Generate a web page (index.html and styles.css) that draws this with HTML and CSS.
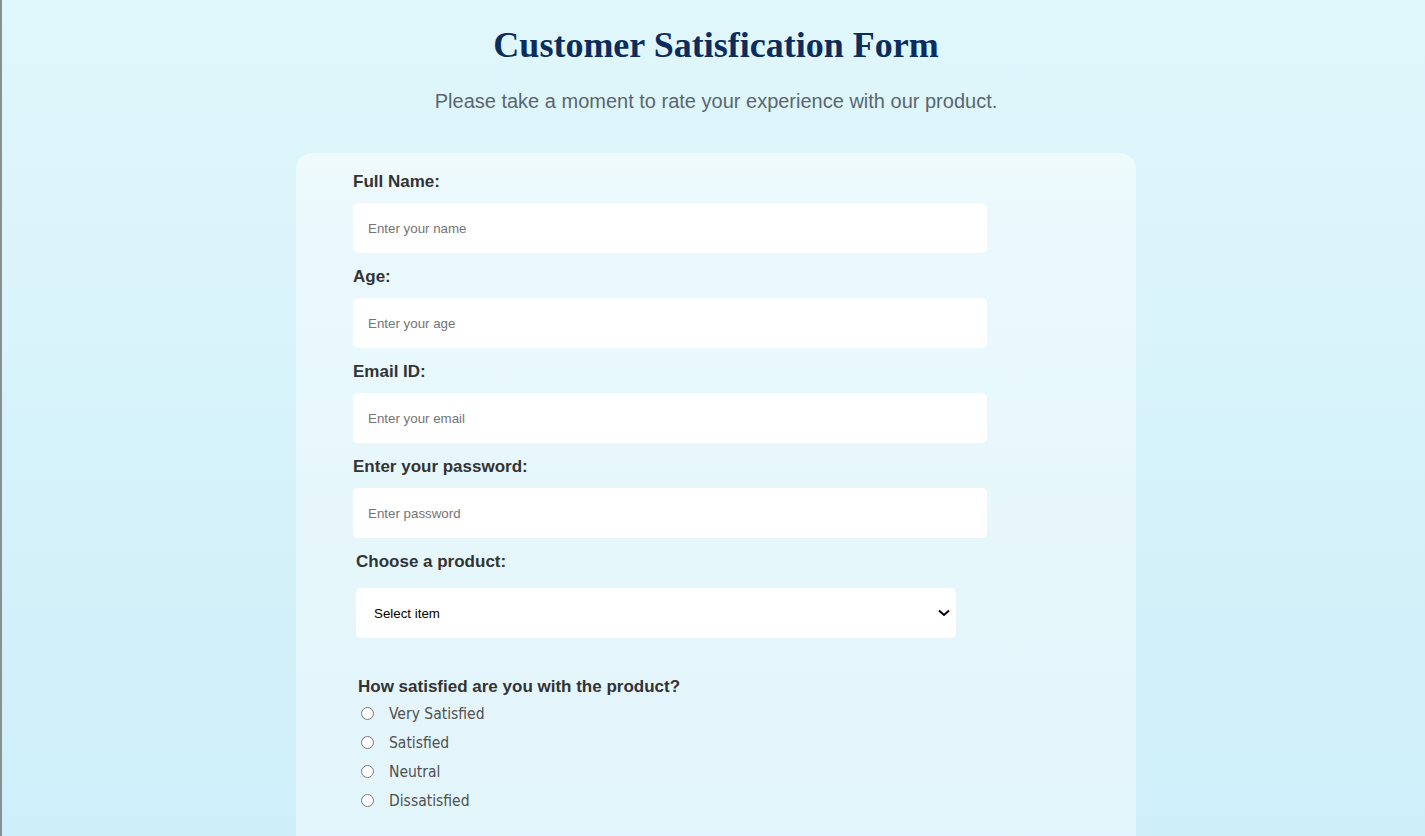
FILE: index.html
```html
<!DOCTYPE html>
<html lang="en">
<head>
<meta charset="utf-8">
<title>Customer Satisfication Form</title>
<link rel="stylesheet" href="styles.css">
</head>
<body>
<div class="page">
  <h1 class="title">Customer Satisfication Form</h1>
  <p class="subtitle">Please take a moment to rate your experience with our product.</p>
  <form class="card">
    <label class="label" for="name">Full Name:</label>
    <input class="field" id="name" type="text" placeholder="Enter your name">
    <label class="label" for="age">Age:</label>
    <input class="field" id="age" type="text" placeholder="Enter your age">
    <label class="label" for="email">Email ID:</label>
    <input class="field" id="email" type="text" placeholder="Enter your email">
    <label class="label" for="pw">Enter your password:</label>
    <input class="field" id="pw" type="password" placeholder="Enter password">
    <label class="label label-product" for="product">Choose a product:</label>
    <div class="select-wrap">
      <select class="select" id="product">
        <option>Select item</option>
      </select>
      <svg class="chev" width="12" height="8" viewBox="0 0 12 8"><path d="M1 1.5 L6 6 L11 1.5" fill="none" stroke="#000" stroke-width="2"/></svg>
    </div>
    <div class="question">How satisfied are you with the product?</div>
    <div class="options">
      <label class="opt"><input type="radio" name="sat"><span>Very Satisfied</span></label>
      <label class="opt"><input type="radio" name="sat"><span>Satisfied</span></label>
      <label class="opt"><input type="radio" name="sat"><span>Neutral</span></label>
      <label class="opt"><input type="radio" name="sat"><span>Dissatisfied</span></label>
    </div>
  </form>
</div>
</body>
</html>
```

FILE: styles.css
```css
html {
  background: #8a8f94;
  height: 100%;
}
body {
  margin: 0 0 0 2px;
  min-height: 100%;
  background: linear-gradient(to bottom, #e0f7fb 0%, #cdeef9 100%);
  border-bottom-left-radius: 6px;
  overflow: hidden;
  font-family: "Liberation Sans", Arial, sans-serif;
}
.page {
  padding-left: 5px;
  padding-top: 24px;
  display: flex;
  flex-direction: column;
  align-items: center;
}
.title {
  font-family: "Liberation Serif", "Times New Roman", serif;
  font-weight: bold;
  font-size: 36px;
  line-height: 42px;
  color: #0a2d5e;
  margin: 0;
}
.subtitle {
  font-size: 20px;
  line-height: 24px;
  color: #5b6570;
  margin: 23px 0 0;
}
.card {
  width: 840px;
  box-sizing: border-box;
  margin-top: 40px;
  padding: 19px 0 40px 57px;
  border-radius: 16px;
  background: linear-gradient(to bottom, rgba(255,255,255,0.55) 0px, rgba(255,255,255,0.42) 60px, rgba(255,255,255,0.42) 100%);
  display: flex;
  flex-direction: column;
  align-items: flex-start;
  min-height: 720px;
}
.label {
  display: block;
  font-size: 17px;
  line-height: 20px;
  font-weight: bold;
  color: #333;
  margin-bottom: 11px;
}
.field {
  width: 634px;
  height: 50px;
  box-sizing: border-box;
  border: none;
  border-radius: 5px;
  background: #fff;
  padding: 0 15px;
  font-family: "Liberation Sans", Arial, sans-serif;
  font-size: 13.33px;
  margin: 0 0 14px;
  outline: none;
}
.field::placeholder {
  color: #757575;
}
.label-product {
  margin-left: 3px;
  margin-bottom: 16px;
}
.select-wrap {
  position: relative;
  margin-left: 3px;
}
.select {
  width: 600px;
  height: 50px;
  box-sizing: border-box;
  border: none;
  border-radius: 5px;
  background: #fff;
  padding: 0 18px;
  font-family: "Liberation Sans", Arial, sans-serif;
  font-size: 13.33px;
  color: #000;
  appearance: none;
  -webkit-appearance: none;
  outline: none;
}
.chev {
  position: absolute;
  right: 6px;
  top: 21px;
  pointer-events: none;
}
.question {
  margin: 39px 0 2px 5px;
  font-size: 17px;
  line-height: 20px;
  font-weight: bold;
  color: #333;
}
.options {
  display: flex;
  flex-direction: column;
  margin-left: 5px;
}
.opt {
  display: flex;
  align-items: center;
  height: 29px;
  font-family: "DejaVu Sans Condensed", "DejaVu Sans", sans-serif;
  font-size: 15.5px;
  color: #505050;
}
.opt input {
  margin: 0 15px 0 3px;
  width: 13px;
  height: 13px;
}
```
